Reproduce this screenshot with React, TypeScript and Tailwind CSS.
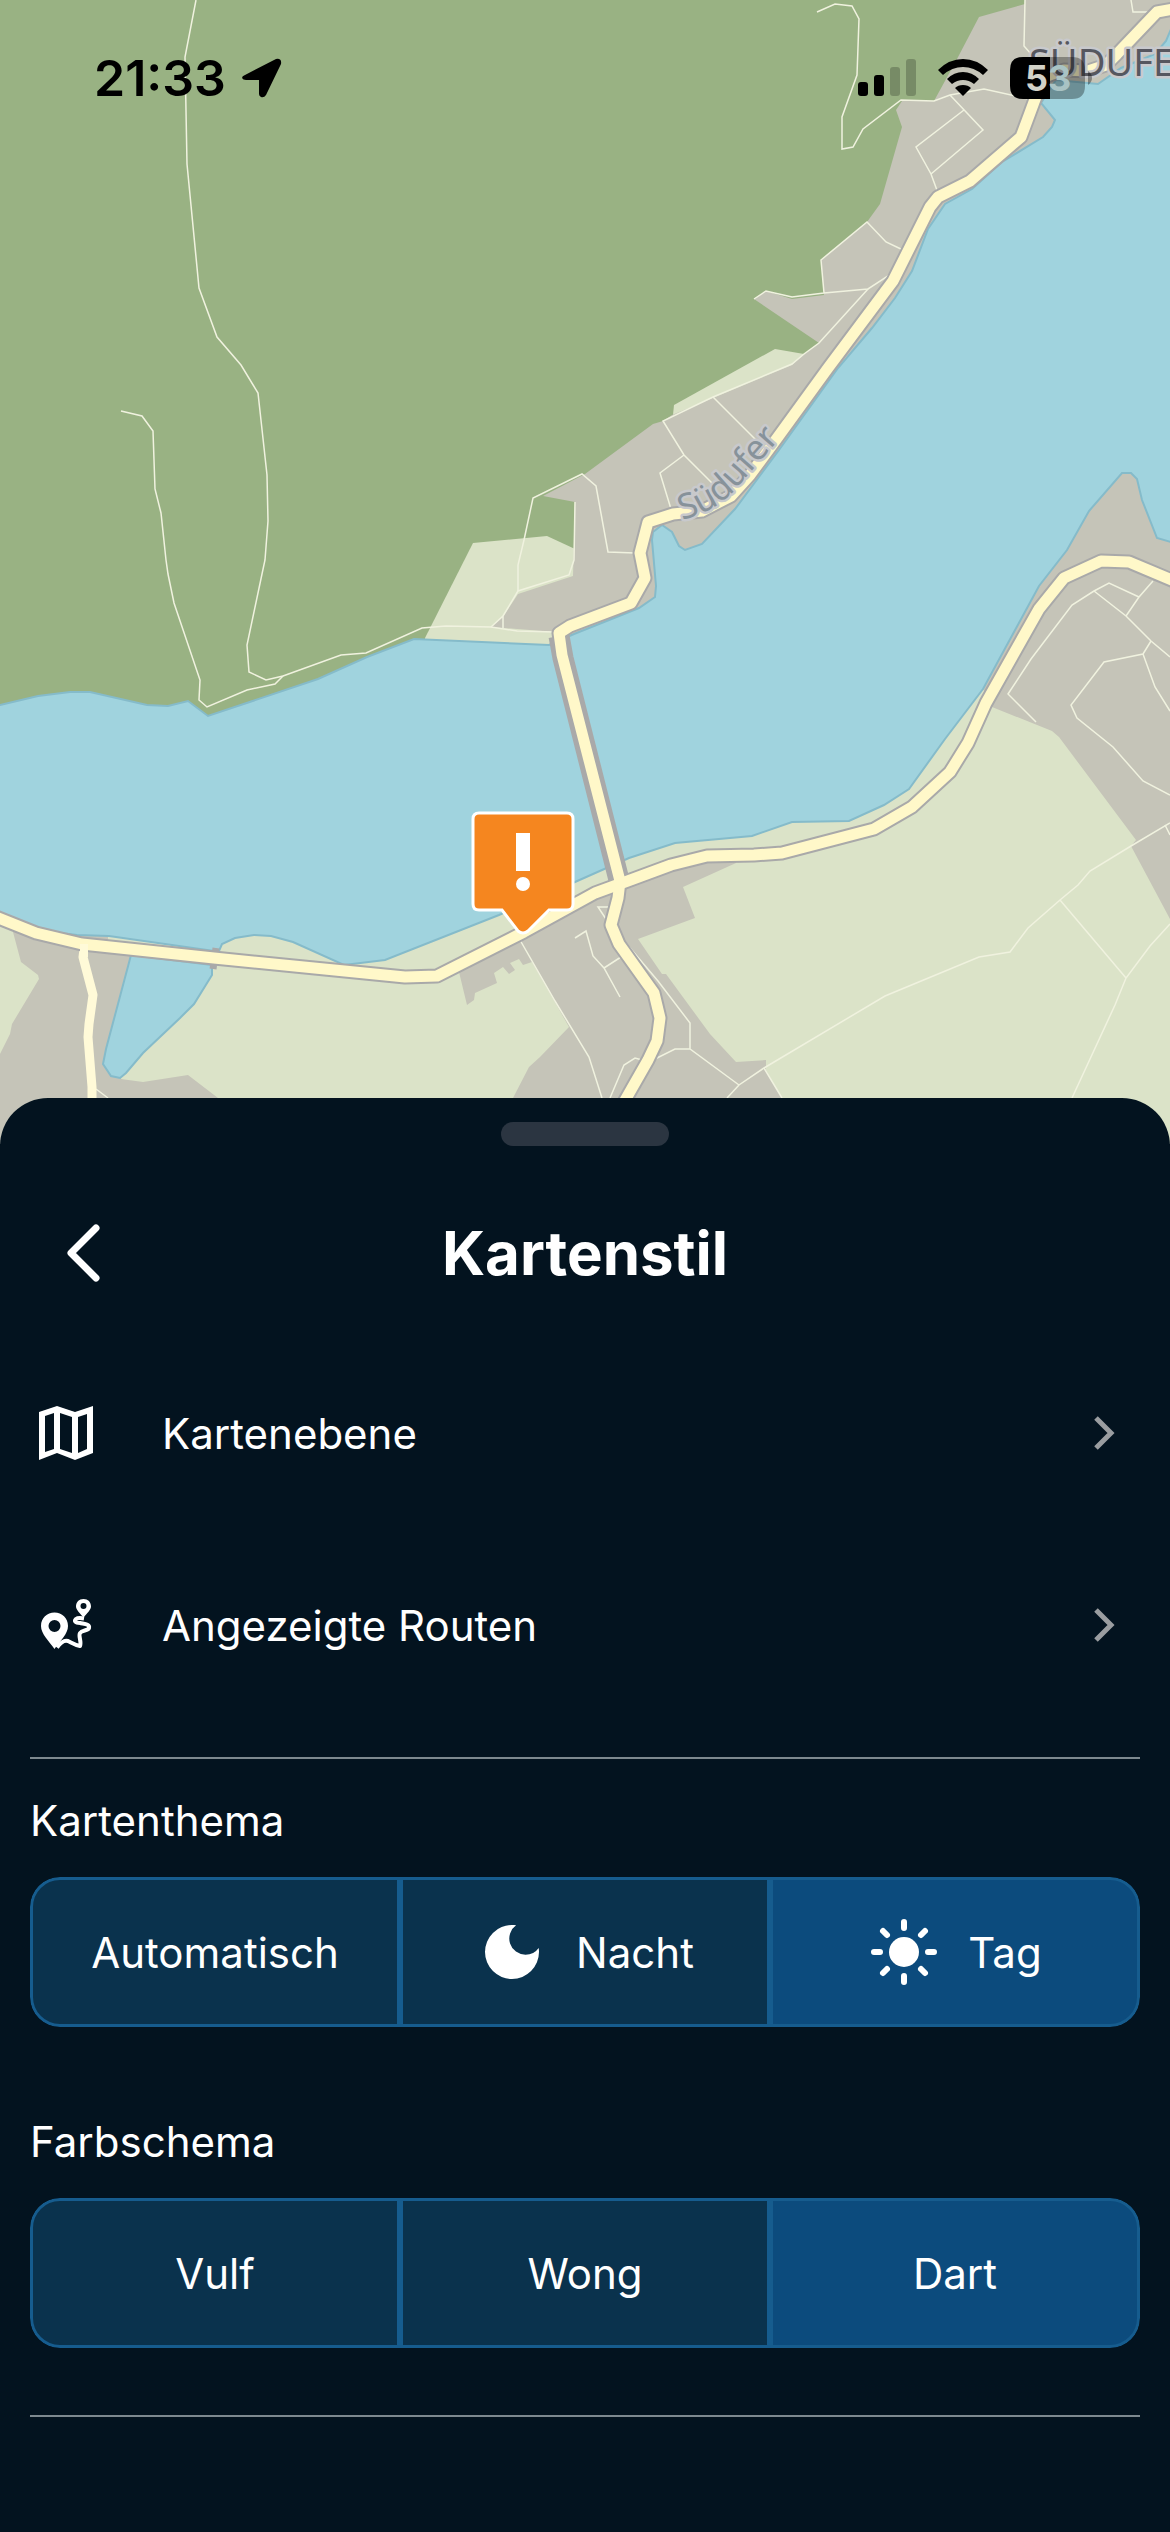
import { useState } from "react";
import type { ReactNode } from "react";

const TRAILS = [
  "M196 0 185 57 187 164 199 288 217 337 241 365 258 393 267 475 268 521 265 560 262 574 247 645 249 672 266 680 283 676 341 655 366 653 422 628 446 626 491 627 517 631 555 632",
  "M121 411 142 416 153 431 155 489 161 513 166 560 168 574 174 603 200 680 199 700 207 707 247 690 275 684 283 676",
  "M575 502 574 560 569 575 518 591 503 616 491 627M503 616V628",
  "M518 591V565L524 540 533 498 582 474 596 486 608 552 635 553",
  "M817 12 835 4 852 6 859 19 857 75 842 117V149L853 147 863 129 901 100 934 101 950 95 984 89 1029 99",
  "M950 95 983 130 931 174M964 110 916 147 931 174 938 193",
  "M754 299 766 291 792 297 824 293 868 289 888 276 893 270M824 293 821 260 867 222 886 242 903 250",
  "M868 289 819 343 804 354 792 364 713 397 663 421 684 455 715 486M684 455 660 473 671 509M713 397 757 441",
  "M1025 0 1024 46 1031 54M1131 0 1133 12H1152",
  "M1036 722 1008 694 1031 659 1072 605 1094 591 1109 583 1139 597 1153 581M1094 591 1126 616 1151 641 1170 657M1139 597 1126 616",
  "M1151 641 1143 654 1104 662 1071 705 1077 718 1113 747 1143 781 1170 795M1143 654 1155 687 1170 711",
  "M1170 823 1131 846 1090 871 1078 885 1060 900 1028 928 1010 952 979 957 885 996 764 1068 739 1085 727 1098M1060 900 1126 978",
  "M1170 924 1150 946 1126 978 1115 1005 1072 1098M764 1068 782 1098M1165 825 1170 835",
  "M739 1085 690 1049H675L655 1059M690 1049V1023L658 981 625 942M610 1098 624 1065 635 1058 642 1060",
  "M575 938 586 931 593 956 604 968 620 997M604 968 621 957M610 907H598L606 919",
  "M520 940 555 1001 589 1057 602 1098M96 1089 108 1098",
];

const SHORE =
  "M0 705 38 696 70 692H90L147 705 168 706 188 701 208 716 318 679 367 657 414 639 549 645 574 634 639 608 655 597 656 586 652 540 653 532 662 525 672 532 679 546 685 550 702 544 735 509 779 450 838 368 872 328 895 298 912 271 928 229 945 204 972 189 1002 162 1043 137 1052 127 1055 120 1041 103 1056 80 1098 84 1121 68 1155 54 1166 41 1174 22V543L1157 538 1142 500 1137 479 1131 473H1122L1089 511 1067 550 1039 586 983 689 945 739 909 789 884 805 849 821 792 822 752 836 675 843 629 858 575 882 499 915 385 960 344 965 293 942 271 936 254 935 235 938 222 944 219 951H214L109 936 77 935 36 930 -4 917V705Z";

const NORTH_ROAD =
  "M1174 9 1157 12 1117 54 1106 65 1088 71 1064 70 1044 77 1034 102 1021 137 970 181 938 197 930 207 893 281 828 368 775 441 750 475 731 496 702 511 673 514 648 522 640 553 645 578 631 603 570 626 559 633 562 655 620 881 618 898 611 925 619 944 654 993 660 1018 657 1041 648 1060 615 1118";

const SOUTH_ROAD =
  "M-4 917 36 933 82 944 214 958 405 977 437 976 524 932 595 893 625 882 671 865 707 856 754 855 782 853 874 829 912 807 950 772 968 743 986 703 1039 609 1064 578 1101 561 1129 562 1174 581";

function MapView() {
  return (
    <svg
      className="absolute inset-0 h-full w-full"
      viewBox="0 0 1170 1144"
      preserveAspectRatio="xMidYMin slice"
      role="img"
      aria-label="Karte"
    >
      {/* Forest */}
      <rect width="1170" height="1144" fill="#99b283" />

      {/* Meadows */}
      <g fill="#dbe3c8">
        <path d="M473 543 547 536 575 549 590 660H425V638Z" />
        <path d="M674 405 775 349 804 354 792 380 672 425Z" />
        <path d="M0 800H600L1000 600 1100 300H1170V1144H0Z" />
      </g>

      {/* Built-up areas */}
      <g fill="#c5c4b8">
        <path d="M1025 4 979 17 957 59 934 101H902L896 110 902 127 880 204 867 222 821 260 824 295 792 299 766 291 754 299 819 343 804 354 792 365 672 415 663 421 653 424 585 474 543 496 575 502 573 576 518 594 503 617 491 627 555 632 600 660 700 600 1000 250 1170 150V0H1025Z" />
        <path d="M13 932 21 962 38 975 39 979 12 1024 10 1034 0 1054V1144H280L218 1098 188 1075 143 1082 121 1079 140 960 108 947V930Z" />
        <path d="M459 972 467 1005 474 1000 475 993 497 983 494 973 503 967 509 974 515 970 510 963 519 959 523 965 532 962 569 1027 540 1057 529 1067 513 1098 490 1144H812L782 1098 766 1070V1060L736 1062 710 1034 666 974H662L638 939 695 918 683 887 736 863V855H707L625 882 524 932Z" />
        <path d="M983 689 992 707 1052 731 1059 737 1136 840 1131 846 1170 919V440H1080L1000 640Z" />
      </g>

      {/* Lake */}
      <g fill="#a0d3de" stroke="#85bbca" strokeWidth="2">
        <path d={SHORE} />
        <path d="M131 955 212 965V975L194 1004 180 1018 143 1053 126 1073 120 1078 111 1076 103 1064 106 1049Z" />
      </g>

      <g fill="none" stroke="#f0f2df" strokeWidth="1.5">
        {TRAILS.map((d) => (
          <path key={d} d={d} />
        ))}
      </g>

      {/* Roads */}
      <g fill="none" strokeLinejoin="round">
        <path d="M84 949 83 957 93 995 89 1024 88 1037 92 1087V1120" stroke="#fffad8" strokeWidth="9" />
        <path d={NORTH_ROAD} stroke="#a9a9a9" strokeWidth="15" />
        <path d={SOUTH_ROAD} stroke="#a9a9a9" strokeWidth="15" />
        <path d="M559 636 563 658 619 880" stroke="#a9a9a9" strokeWidth="21" />
        <path d="M216 948 213 969" stroke="#a9a9a9" strokeWidth="7" />
        <path d={NORTH_ROAD} stroke="#fff8c9" strokeWidth="11" />
        <path d={SOUTH_ROAD} stroke="#fff8c9" strokeWidth="11" />
        <path d="M84 944V957" stroke="#fffad8" strokeWidth="8" />
      </g>

      {/* Labels */}
      <path id="shore-road" d="M682 520Q714 512 734 491L798 418" fill="none" />
      <g className="font-['Noto_Sans']" paintOrder="stroke" strokeLinejoin="round" strokeWidth="5">
        <text fontSize="35" fill="#87929a" stroke="#c8c9cc">
          <textPath href="#shore-road">Südufer</textPath>
        </text>
        <text x="1029" y="76" fontSize="38" fill="#56575f" stroke="#c8c9cc">
          SÜDUFER
        </text>
      </g>

      {/* Warning pin */}
      <path
        d="M479 813H567Q573 813 573 819V904Q573 910 567 910H549L528 931Q523 935 518 931L502 910H479Q473 910 473 904V819Q473 813 479 813Z"
        fill="#f5861f"
        stroke="#fff"
        strokeWidth="3"
      />
      <path d="M516 833H530V871H516Z" fill="#fff" />
      <circle cx="523" cy="884" r="7" fill="#fff" />
    </svg>
  );
}

function StatusBar() {
  return (
    <div className="relative flex items-center justify-between pt-12 pr-[78px] pl-[94px] text-black">
      <div className="flex items-center gap-4">
        <span className="text-[50px] leading-[60px] font-semibold">21:33</span>
        <svg width="40" height="40" viewBox="0 0 40 40" aria-hidden="true">
          <path
            d="M3 17 34 1Q40 0 39 6L24 37Q22 40 19 39 17 38 17 36V22H4Q1 22 0 20 0 18 3 17Z"
            fill="currentColor"
          />
        </svg>
      </div>
      <div className="flex items-center gap-[22px]">
        <svg width="58" height="38" viewBox="0 0 58 38" aria-hidden="true">
          <rect y="23" width="10" height="14" rx="3" />
          <rect x="16" y="16" width="10" height="21" rx="3" />
          <rect x="32" y="8" width="10" height="29" rx="3" opacity=".22" />
          <rect x="48" width="10" height="37" rx="3" opacity=".22" />
        </svg>
        <svg width="50" height="38" viewBox="0 0 50 38" aria-hidden="true">
          <path d="M0 11Q11 0 25 0T50 11L45 16Q36 8 25 8T5 16Z" />
          <path d="M9 20Q16 13 25 13T41 20L36 25Q31 21 25 21T14 25Z" />
          <path d="M17 29Q20 26 25 26T33 29L25 37Z" />
        </svg>
        <svg width="82" height="42" viewBox="0 0 82 42" role="img" aria-label="Akku 53 %">
          <path d="M40 0H62Q75 0 75 13V29Q75 42 62 42H40Z" opacity=".32" />
          <path d="M78 14Q82 17 82 21T78 28Z" opacity=".35" />
          <path d="M40 0H13Q0 0 0 13V29Q0 42 13 42H40Z" />
          <text x="15" y="34" fontSize="36" fontWeight="700" fill="#d3d2c8">
            5
          </text>
          <text x="38" y="34" fontSize="36" fontWeight="700" fill="#a9c3c4">
            3
          </text>
        </svg>
      </div>
    </div>
  );
}

function MapIcon() {
  return (
    <svg width="54" height="54" viewBox="0 0 54 54" fill="currentColor" fillRule="evenodd" aria-hidden="true">
      <path d="M0 6 18 0 36 6 54 0V47L36 54 18 47 0 54ZM6 10V46L15 43V7ZM21 7V43L33 47V11ZM39 11V47L48 43V8Z" />
    </svg>
  );
}

function RoutesIcon() {
  return (
    <svg width="54" height="54" viewBox="0 0 54 54" fill="currentColor" fillRule="evenodd" aria-hidden="true">
      <path d="M15.500 14.500C8 14.500 2 20 2 28 2 36 10 43 15.500 51 21 43 29 36 29 28 29 20 23 14.500 15.500 14.500ZM15.500 22A6 6 0 1 1 15.500 34 6 6 0 1 1 15.500 22Z" />
      <path d="M44.500 1C40 1 37 4 37 8.500 37 12 41 15 44.500 19.500 48 15 52 12 52 8.500 52 4 49 1 44.500 1ZM44.500 5A3 3 0 1 1 44.500 11 3 3 0 1 1 44.500 5Z" />
      <path
        d="M18 49.500C22 44 26 42 29 43 33 45 36 47 41 48 43 44 39 38 41 35 43 32 49 33 50 30 51 26 45 26 41 25 36 25 35 23 37 21 39 19.500 42 20 45 20.500"
        fill="none"
        stroke="currentColor"
        strokeWidth="4"
        strokeLinejoin="round"
      />
    </svg>
  );
}

function MoonIcon() {
  return (
    <svg width="72" height="72" viewBox="0 0 24 24" fill="currentColor" aria-hidden="true">
      <path d="M12 3a9 9 0 1 0 9 9c0-.46-.04-.92-.1-1.360a5.389 5.389 0 0 1-4.400 2.260 5.403 5.403 0 0 1-3.140-9.800c-.44-.06-.9-.1-1.360-.1z" />
    </svg>
  );
}

function SunIcon() {
  return (
    <svg width="72" height="72" viewBox="-3 -3 72 72" aria-hidden="true">
      <circle cx="33" cy="33" r="15" fill="currentColor" />
      <path
        d="M33 3V9M33 57V63M3 33H9M57 33H63M12 12 16 16M50 50 54 54M12 54 16 50M50 16 54 12"
        stroke="currentColor"
        strokeWidth="6"
        strokeLinecap="round"
      />
    </svg>
  );
}

function MenuRow({ icon, label }: { icon: ReactNode; label: string }) {
  return (
    <button type="button" className="flex h-48 w-full items-center pr-6 pl-[9px] text-left">
      <span className="w-[123px]">{icon}</span>
      <span className="flex-1">{label}</span>
      <svg width="24" height="36" viewBox="0 0 24 36" fill="none" aria-hidden="true">
        <path d="M4 3 19 18 4 33" stroke="#9a9da0" strokeWidth="5" />
      </svg>
    </button>
  );
}

type Option = { label: string; icon?: ReactNode };

function SegmentedControl({ id, title, options, initial }: { id: string; title: string; options: Option[]; initial: string }) {
  const [selected, setSelected] = useState(initial);

  return (
    <section>
      <h2 id={id} className="mb-8 leading-[48px]">
        {title}
      </h2>
      <div role="group" aria-labelledby={id} className="grid h-[150px] grid-cols-3 overflow-hidden rounded-[30px]">
        {options.map(({ label, icon }) => (
          <button
            key={label}
            type="button"
            aria-pressed={selected === label}
            onClick={() => setSelected(label)}
            className={`flex items-center justify-center gap-7 border-[3px] border-[#165c8e] first:rounded-l-[30px] last:rounded-r-[30px] ${
              selected === label ? "bg-[#0c4b7d]" : "bg-[#0a324d]"
            }`}
          >
            {icon}
            {label}
          </button>
        ))}
      </div>
    </section>
  );
}

export default function App() {
  return (
    <main className="flex min-h-screen flex-col bg-[#03131f] font-['Inter',sans-serif]">
      <div className="relative aspect-[1170/1144] w-full overflow-hidden">
        <MapView />
        <StatusBar />
      </div>

      {/* Bottom sheet */}
      <div className="relative -mt-[46px] flex-1 rounded-t-[48px] bg-[#03131f] px-[30px] pt-6 pb-28 text-[42px] text-white">
        <div className="mx-auto h-6 w-[168px] rounded-full bg-[#2b3541]" />

        <header className="mt-[59px] mb-9 grid h-24 grid-cols-[96px_1fr_96px] items-center">
          <button type="button" aria-label="Zurück" className="flex h-24 items-center pl-9">
            <svg width="36" height="60" viewBox="0 0 36 60" fill="none" aria-hidden="true">
              <path d="M30 5 5 30 30 55" stroke="currentColor" strokeWidth="7" strokeLinecap="round" strokeLinejoin="round" />
            </svg>
          </button>
          <h1 className="text-center text-[60px] leading-[72px] font-bold">Kartenstil</h1>
        </header>

        <nav>
          <MenuRow icon={<MapIcon />} label="Kartenebene" />
          <MenuRow icon={<RoutesIcon />} label="Angezeigte Routen" />
        </nav>

        <hr className="mt-9 mb-[38px] border-t-2 border-[#7d898f]" />

        <div className="flex flex-col gap-[91px]">
          <SegmentedControl
            id="kartenthema"
            title="Kartenthema"
            initial="Tag"
            options={[{ label: "Automatisch" }, { label: "Nacht", icon: <MoonIcon /> }, { label: "Tag", icon: <SunIcon /> }]}
          />
          <SegmentedControl
            id="farbschema"
            title="Farbschema"
            initial="Dart"
            options={[{ label: "Vulf" }, { label: "Wong" }, { label: "Dart" }]}
          />
        </div>

        <hr className="mt-[67px] border-t-2 border-[#7d898f]" />
      </div>
    </main>
  );
}
